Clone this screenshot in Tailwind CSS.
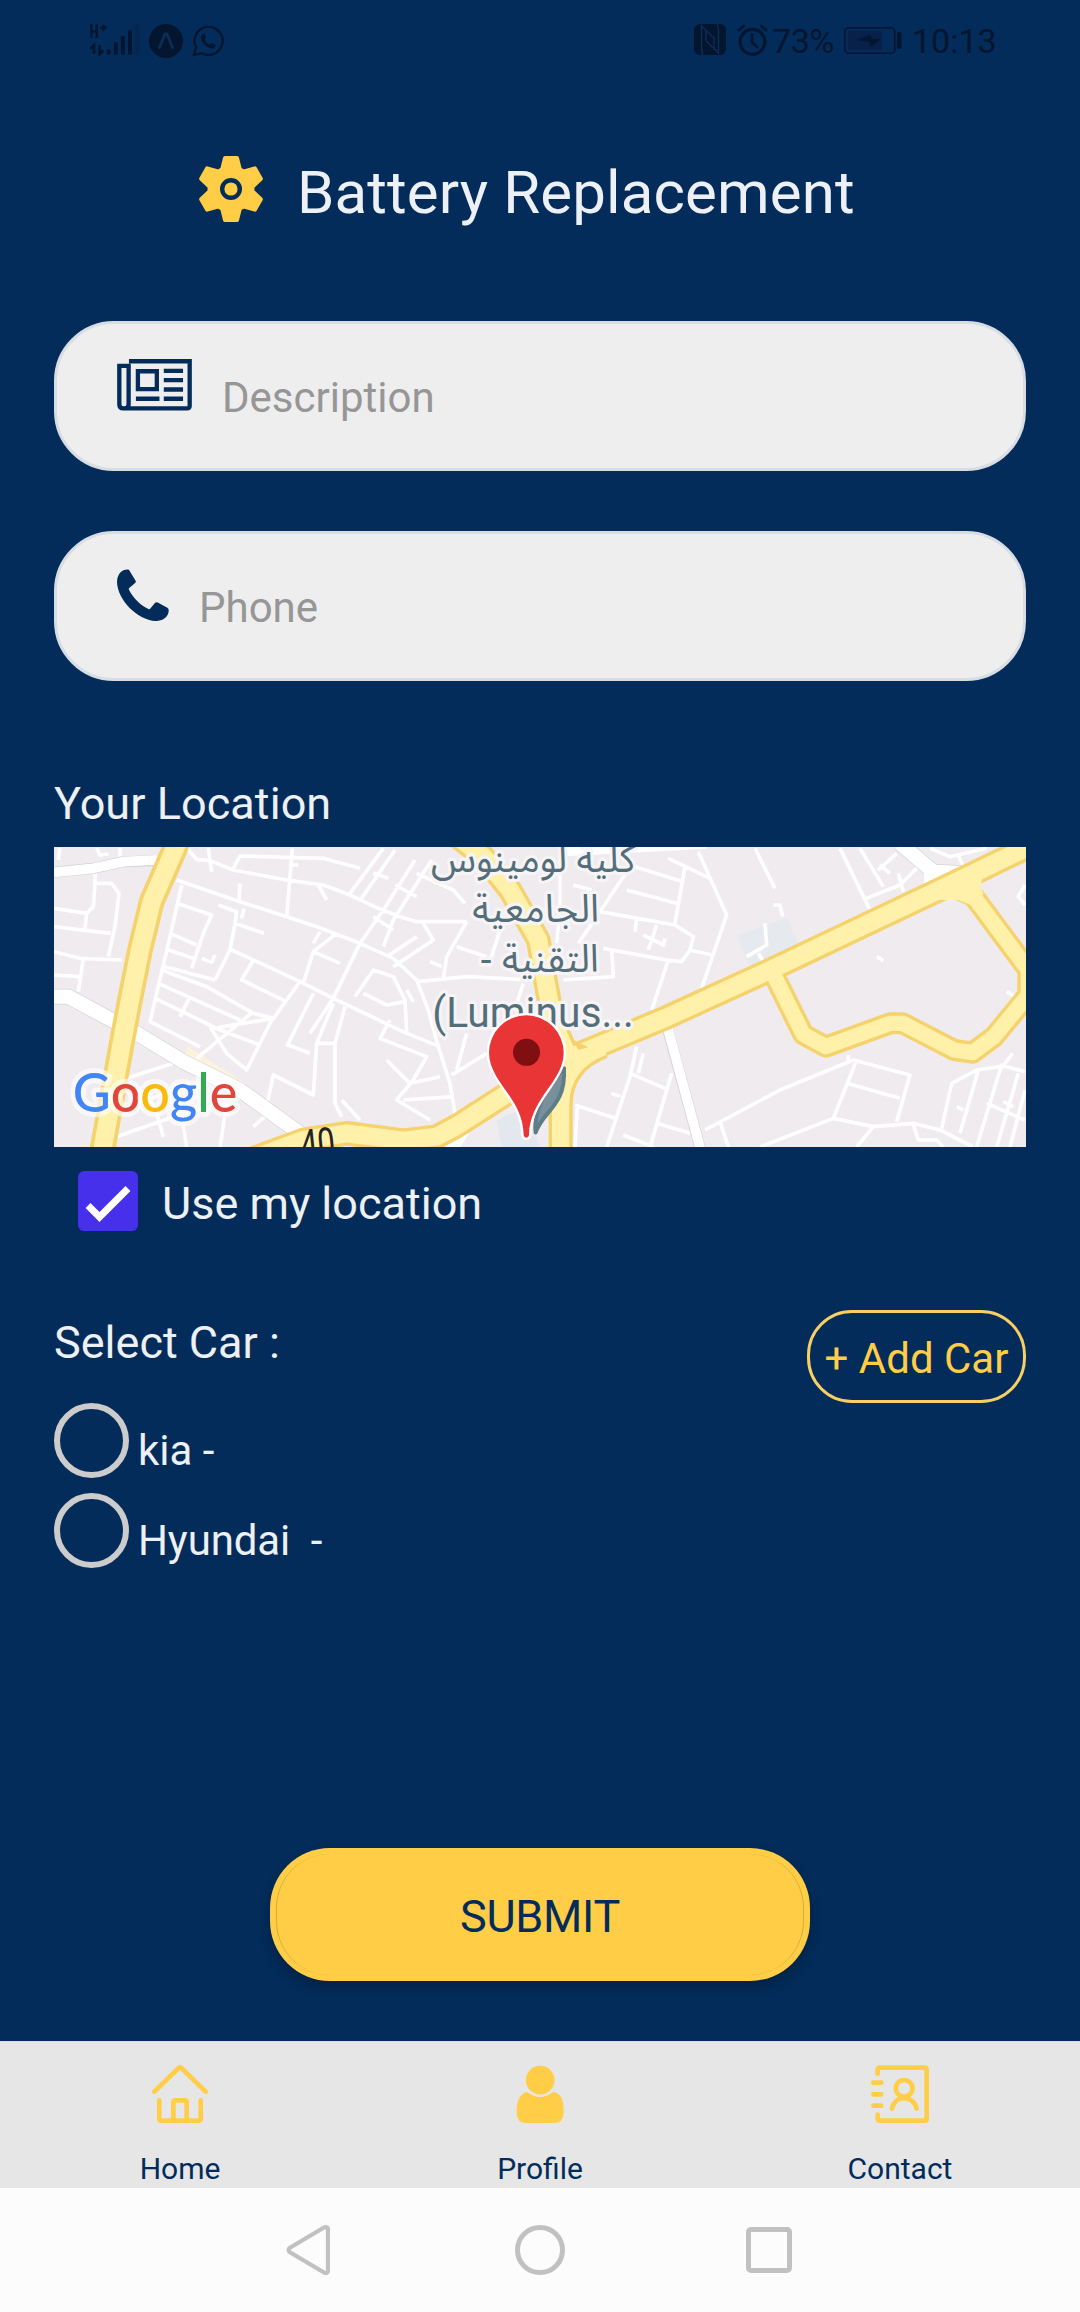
<!DOCTYPE html>
<html lang="en">
<head>
<meta charset="utf-8">
<title>Battery Replacement</title>
<script src="https://cdn.jsdelivr.net/npm/@tailwindcss/browser@4"></script>
</head>
<body class="w-[1080px] h-[2312px] overflow-hidden flex flex-col bg-[#032c5a] text-[#edf0f4] font-['Roboto',sans-serif] leading-none">

<!-- status bar -->
<div class="h-[80px] shrink-0 flex items-start pl-[89px] pr-[84px] text-[#04152f]">
  <svg class="mt-[23px] w-[51px] h-[34px]" viewBox="87 70 153 102" fill="none" stroke="currentColor">
    <path d="M94 74V115M110 74V115M94 95H110M121 84H140M130.500 75V94" stroke-width="7"/>
    <path d="M91 147L102 137V163M119 137V163L130 152" stroke-width="8"/>
    <path d="M146 155V160M167.500 133V160M188.500 114V160M210 96V160" stroke-width="12" stroke-linecap="round"/>
    <path d="M232 80V160" stroke="#07264f" stroke-width="12" stroke-linecap="round"/>
  </svg>
  <svg class="mt-[24px] ml-[9px] w-[34px] h-[34px]" viewBox="0 0 34 34">
    <circle cx="17" cy="17" r="17" fill="currentColor"/>
    <path d="M10.500 23.500L16 10H18L23.500 23.500" fill="none" stroke="#0a2c55" stroke-width="3" stroke-linecap="round"/>
  </svg>
  <svg class="mt-[25px] ml-[9px] w-[32px] h-[32px]" viewBox="0 0 32 32">
    <path d="M2 30L4 22A14 14 0 1 1 10 28.200Z" fill="none" stroke="currentColor" stroke-width="2.300"/>
    <path d="M9 11C10 8.500 11.500 8 12.800 9L14 12.500L12.500 14.500C13.500 17 15.500 19 18 19.800L20 18L23.500 20C24 22.500 21.500 23.800 19.500 23.500C13.500 22 9 17 9 11Z" fill="currentColor"/>
  </svg>
  <div class="flex-1"></div>
  <svg class="mt-[24px] w-[32px] h-[32px]" viewBox="0 0 32 32">
    <rect width="32" height="31" rx="6" fill="currentColor"/>
    <path d="M9 31C7 28 7.500 23 7.500 18V2L20 14V26M23 0C25 4 24.500 8 24.500 13V29L12 17V7" fill="none" stroke="#0a2c55" stroke-width="1.500"/>
  </svg>
  <svg class="mt-[24px] ml-[11px] w-[31px] h-[32px]" viewBox="0 0 31 32" fill="none" stroke="currentColor" stroke-linecap="round">
    <circle cx="15.500" cy="17.800" r="12.400" stroke-width="3.200"/>
    <path d="M15 10.500V18L20 23" stroke-width="2.800"/>
    <path d="M2 6L6.500 2M24.500 2L29 6" stroke-width="3"/>
  </svg>
  <span class="mt-[24px] ml-[4px] text-[34px] tracking-[-0.3px] w-[72px]">73%</span>
  <svg class="mt-[27px] w-[58px] h-[27px]" viewBox="0 0 58 27">
    <rect x=".8" y=".8" width="50" height="25.400" rx="4" fill="none" stroke="currentColor" stroke-width="1.600"/>
    <rect x="4" y="4" width="34" height="19" fill="#07214a"/>
    <path d="M13 13L26 8L28 12H37L27 19.500L25 15Z" fill="currentColor"/>
    <rect x="53" y="5" width="4.500" height="17" rx="2" fill="currentColor"/>
  </svg>
  <span class="mt-[24px] ml-[10px] w-[84px] text-[34px] whitespace-nowrap">10:13</span>
</div>

<!-- title -->
<header class="h-[241px] shrink-0 flex items-start pl-[198px] pt-[76px]">
  <svg class="w-[66px] h-[66px]" viewBox="-33 -33 66 66">
    <g fill="#ffcd46" stroke="#ffcd46" stroke-width="4" stroke-linejoin="round">
      <circle r="21.500"/>
      <path d="M-6 -31H6L8.500 -21V21L6 31H-6L-8.500 21V-21Z"/>
      <path transform="rotate(60)" d="M-6 -31H6L8.500 -21V21L6 31H-6L-8.500 21V-21Z"/>
      <path transform="rotate(120)" d="M-6 -31H6L8.500 -21V21L6 31H-6L-8.500 21V-21Z"/>
    </g>
    <circle r="8.800" fill="none" stroke="#032c5a" stroke-width="4.400"/>
  </svg>
  <h1 class="ml-[33px] mt-[7px] text-[60px] tracking-[0.12px] whitespace-nowrap">Battery Replacement</h1>
</header>

<!-- inputs -->
<div class="mx-[54px] h-[150px] shrink-0 rounded-[60px] border-[3px] border-[#d8dde4] bg-[#eee] flex items-start pl-[60px] text-[#969696]">
  <svg class="mt-[35px] w-[75px] h-[52px]" viewBox="231 148 226 155">
    <g fill="none" stroke="#032c5a" stroke-width="13">
      <path d="M267 154H450V288Q450 296 442 296H250Q238 296 238 284V168H266V285Q266 296 253 296"/>
      <path d="M294 184H351V238H294ZM288 267H359M372 183H430M372 211H430M372 239H430M372 267H430"/>
    </g>
  </svg>
  <span class="ml-[30px] mt-[53px] text-[42px]">Description</span>
</div>
<div class="mt-[60px] mx-[54px] h-[150px] shrink-0 rounded-[60px] border-[3px] border-[#d8dde4] bg-[#eee] flex items-start pl-[60px] text-[#969696]">
  <svg class="mt-[35px] w-[52px] h-[52px]" viewBox="231 776 157 157">
    <path d="M252 779Q261 776 267 778L288 813Q288 817 284 820L267 834Q266 837 268 840C280 864 303 886 326 897Q329 898 331 896L346 878Q350 875 354 877L383 893Q387 895 387 900C388 920 370 934 348 933C291 930 232 867 231 815Q232 787 252 779Z" fill="#032c5a"/>
  </svg>
  <span class="ml-[30px] mt-[53px] text-[42px]">Phone</span>
</div>

<!-- location -->
<h2 class="mt-[100px] ml-[54px] h-[66px] shrink-0 text-[45px] tracking-[0.05px]">Your Location</h2>
<svg class="mx-[54px] w-[972px] h-[300px] shrink-0 block" viewBox="42 231 2916 900">
  <rect x="42" y="231" width="2916" height="900" fill="#efebef"/>
  <path d="M445 830L615 940L600 962L410 895Z" fill="#fdf3dc"/>
  <path d="M1370 1050L1460 1010L1500 1131H1385Z" fill="#e4e8ee"/>
  <path d="M2090 495L2240 445L2275 520L2130 590Z" fill="#e6eaef"/>
  <!-- side streets, west -->
  <path fill="none" stroke="#fff" stroke-width="11" stroke-linejoin="round" d="M42 470L212 490M165 310V340H215L237 370L225 470L205 560M165 340L160 410L140 430L42 415M140 430L135 475M42 545L120 565L245 570M130 565L115 665M42 615L120 620M60 235L55 270M170 235L180 255L205 252M240 235V260M440 235L470 268L510 272M505 235L515 305M510 272L580 300L740 330L850 345L930 375L1015 415L1080 440L1130 455H1280M580 295L600 258L740 262L850 265L960 295M757 235L740 440M757 285H775M835 345L860 390M410 330L600 395L740 440L830 470L960 520L1060 565L1130 630L1165 720L1195 830L1230 940L1250 1060M600 340L597 390M612 415L605 445M535 405L590 425L585 460L672 490M585 460L570 540L525 630M425 345L390 500L330 755L480 830M410 400L515 435L490 490L455 595M390 490L470 525M385 540L460 565M375 590L525 630M485 565L515 577L525 555M575 540L780 635L880 685L1100 790L1200 830M640 570L605 630L740 695M365 600L500 650L640 730L700 745M355 640L600 750M345 685L540 780M450 680L420 740M700 745L520 775M640 725L470 865M510 770L560 850L620 900L690 760L740 690L780 635M540 780L660 825M1030 235L930 370M1065 240L965 385M1125 270L1030 420L960 520L880 685L810 790M1175 270L1060 450L1030 530M1065 345L1130 380M1000 310L1045 325M1000 440L1060 480M890 490L820 545L790 640M820 545L900 580M840 485L820 520M820 670L740 830M745 825L810 850M915 710L885 820V1000L905 1040M830 820H885M880 700L830 820L820 975L700 915L680 1010M905 990L960 1050M945 680L1000 600L1060 620L1095 690L1100 790M970 670L1040 705L1095 695M1130 635L1280 620L1480 630M1040 560L1130 500M1060 590L1180 510L1150 460M1280 455L1220 560L1210 625M1170 575L1205 590M1050 750L1020 805L1160 860L1120 930L1070 990L1170 1050M1040 870L1110 940L1200 920M1280 790L1250 900M1235 915L1340 850M1250 530L1340 560M1450 640L1430 700M1100 660L1120 695M1090 990L1240 980M260 925L400 880M270 1010L450 940M300 960L345 1010M410 940L440 1131M230 1100L400 1040L560 1000L540 1131M640 1070L680 1035L740 1045M350 1030L370 1100M1240 360L1275 400M1130 310L1240 360M1380 480L1345 590"/>
  <!-- side streets, east -->
  <g transform="translate(1440 0)" fill="none" stroke="#fff">
    <path stroke-width="11" stroke-linejoin="round" d="M535 245L620 435L545 655M445 265L570 325M345 290L490 335M495 290L465 460M320 360L470 400M330 290L240 425L465 465L520 500L510 540L485 575L440 570L250 535M510 540L575 555M445 570L395 720M240 425L175 520M350 445L345 485M370 495L430 525L435 505M275 540L280 620L130 630M410 465L385 540M160 345L215 360M705 235L765 355M760 405H780L788 440M735 460L740 525L680 560M715 550L730 575M960 235L1050 420M1040 385L1140 345L1210 275M1020 235L1090 350M1075 300L1130 250M1080 285L1110 310M1135 310L1150 365M1230 235L1290 260L1400 235M1315 255L1330 290M1515 345L1495 380L1515 405M1070 560L1090 572M1460 665L1480 677M555 1080L780 960L1000 870L1170 915L1130 1055M1010 870L940 1045M980 940L1140 985M720 1131L940 1045L1060 1070L1180 1060L1260 1080L1360 1131M1060 1070L1010 1131M600 1055L625 1131M985 855V870M1478 850L1440 900L1370 1131M1440 885L1515 905M1440 890L1370 900L1295 940L1265 1075M1375 900L1320 1090M1495 910L1430 1131M1400 1000L1515 1050M1310 1010L1330 1020M1450 995L1480 1010M1515 960L1470 1131M1180 1065L1195 1110H1250L1270 1131M350 830L330 920L260 1131M370 850L355 910M330 910L435 955M455 910L390 1131M165 1005L285 1045M410 1060L510 1090M310 1095L400 1131M275 970L300 980M172 1005L165 1131"/>
    <path d="M120 230V420L110 520" stroke-width="10"/>
  </g>
  <!-- wide white roads -->
  <g fill="none" stroke-linejoin="round">
    <path stroke="#d3d3d8" stroke-width="33" d="M42 307L160 295L250 275L340 272M1878 760L1985 1150"/>
    <path stroke="#fff" stroke-width="29" d="M42 307L160 295L250 275L350 270M1560 245L2000 222M1878 755L1985 1150"/>
    <path stroke="#d3d3d8" stroke-width="47" d="M20 680H85L215 750L290 790L430 875L600 960L800 1105M2580 220L2680 305L2780 310"/>
    <path stroke="#fff" stroke-width="43" d="M20 680H85L215 750L290 790L430 875L600 960L800 1105M2580 220L2680 305L2780 310"/>
    <path stroke="#fff" stroke-width="40" d="M1270 1080L1230 1140M2672 300V350"/>
  </g>
  <!-- main roads -->
  <g fill="none" stroke-linejoin="round">
    <g stroke="#f5d26c">
      <path stroke-width="77" d="M420 195L405 235L335 395L300 540L268 700L247 810L187 1140"/>
      <path stroke-width="74" d="M600 1180L790 1110L920 1090L1090 1112L1190 1100L1250 1068L1390 978L1560 875L1670 830L1880 742L2180 605L2655 380L2760 330L2970 228"/>
      <path stroke-width="74" d="M1240 190L1330 260L1410 360L1495 510L1518 640L1540 760L1580 850"/>
      <path stroke-width="72" d="M1690 830Q1560 880 1562 1010V1150"/>
      <path stroke-width="66" d="M2205 622L2290 793L2358 830L2550 760H2588L2743 840L2798 848L2862 800L2965 675V600L2800 378L2740 350"/>
    </g>
    <g stroke="#fff1aa">
      <path stroke-width="55" d="M420 195L405 235L335 395L300 540L268 700L247 810L187 1140"/>
      <path stroke-width="54" d="M600 1180L790 1110L920 1090L1090 1112L1190 1100L1250 1068L1390 978L1560 875L1670 830L1880 742L2180 605L2655 380L2760 330L2970 228"/>
      <path stroke-width="54" d="M1240 190L1330 260L1410 360L1495 510L1518 640L1540 760L1580 850"/>
      <path stroke-width="52" d="M1690 830Q1560 880 1562 1010V1150"/>
      <path stroke-width="46" d="M2180 580L2205 622L2290 793L2358 830L2550 760H2588L2743 840L2798 848L2862 800L2965 675V600L2800 378L2740 350"/>
    </g>
  </g>
  <path d="M2690 350L2830 300L2822 350L2830 372L2800 408L2755 390H2690Z" fill="#fff1aa"/>
  <path d="M1600 810L1645 832L1615 840Z" fill="#f5d26c"/>
  <!-- labels -->
  <g fill="#546e7a" stroke="#f6f4f6" stroke-width="20" stroke-linejoin="round" paint-order="stroke" text-anchor="middle" font-size="116" font-family="'Noto Sans Arabic','Noto Sans','DejaVu Sans',sans-serif">
    <text x="1479" y="305" direction="rtl" textLength="612" lengthAdjust="spacingAndGlyphs">كلية لومينوس</text>
    <text x="1487" y="455" direction="rtl" textLength="380" lengthAdjust="spacingAndGlyphs">الجامعية</text>
    <text x="1498" y="605" direction="rtl" textLength="356" lengthAdjust="spacingAndGlyphs">التقنية -</text>
    <text x="1479" y="771" font-size="128" font-family="Roboto,sans-serif" textLength="604" lengthAdjust="spacingAndGlyphs">(Luminus...</text>
  </g>
  <text x="785" y="1170" transform="rotate(-6 785 1170)" font-size="126" font-family="Roboto,sans-serif" textLength="105" lengthAdjust="spacingAndGlyphs" fill="#222">40</text>
  <!-- marker -->
  <path d="M1572 895C1578 1010 1510 1020 1487 1087C1483 1060 1490 1000 1540 930Z" fill="#78909c" stroke="#5f7d89" stroke-width="12" stroke-linejoin="round"/>
  <path d="M1459 736A112 112 0 0 1 1571 848C1571 935 1468 985 1467 1096Q1466 1103 1459 1103T1451 1096C1450 985 1347 935 1347 848A112 112 0 0 1 1459 736Z" fill="#e93535" stroke="#fff" stroke-width="14" paint-order="stroke"/>
  <circle cx="1459.500" cy="847" r="40.500" fill="#7f0f10"/>
  <text x="98" y="1025" font-size="164" font-weight="500" font-family="Lato,sans-serif" textLength="494" lengthAdjust="spacingAndGlyphs" stroke="#ffffff" stroke-opacity=".6" stroke-width="30" stroke-linejoin="round" paint-order="stroke"><tspan fill="#4285f4">G</tspan><tspan fill="#e2453a">o</tspan><tspan fill="#f9bb0b">o</tspan><tspan fill="#4285f4">g</tspan><tspan fill="#34a853">l</tspan><tspan fill="#e2453a">e</tspan></text>
</svg>

<div class="mt-[24px] h-[60px] shrink-0 flex items-start pl-[78px]">
  <svg class="w-[60px] h-[60px]" viewBox="0 0 60 60"><rect width="60" height="60" rx="6" fill="#4630eb"/><path d="M10 34.500L21.500 46L50 17.500" fill="none" stroke="#fff" stroke-width="7"/></svg>
  <span class="ml-[24px] mt-[10px] text-[45px] whitespace-nowrap">Use my location</span>
</div>

<!-- car picker -->
<div class="mt-[79px] h-[93px] shrink-0 flex items-start justify-between px-[54px]">
  <h2 class="mt-[10px] text-[45px]">Select Car :</h2>
  <div class="w-[219px] h-[93px] rounded-[45px] border-[3px] border-[#f8cf62] text-[#ffcd46] text-[42px] pt-[25px] text-center whitespace-nowrap">+ Add Car</div>
</div>
<div class="h-[75px] shrink-0 flex items-start pl-[54px]">
  <div class="size-[75px] rounded-full border-[6px] border-[#ccc]"></div>
  <span class="ml-[9px] mt-[27px] text-[42px]">kia -</span>
</div>
<div class="mt-[15px] h-[75px] shrink-0 flex items-start pl-[54px]">
  <div class="size-[75px] rounded-full border-[6px] border-[#ccc]"></div>
  <span class="ml-[9px] mt-[27px] text-[42px] tracking-[-0.1px] whitespace-pre">Hyundai  -</span>
</div>

<div class="mt-[280px] mx-auto w-[540px] h-[133px] shrink-0 rounded-[60px] bg-[#ffcd46] p-[6px] shadow-[0_6px_12px_rgba(0,0,0,0.25)]">
  <div class="h-full rounded-[54px] border-x border-[#d9ac38] pt-[40px] text-center text-[45px] tracking-[-0.3px] text-[#032c5a]">SUBMIT</div>
</div>

<!-- tab bar -->
<nav class="mt-[60px] h-[147px] shrink-0 bg-[#e6e6e6] border-t border-[#d4dcec] grid grid-cols-3 text-[#032c5a] text-[30px]">
  <div class="flex flex-col items-center pt-[22px]">
    <svg class="w-[60px] h-[61px]" viewBox="150 102 180 183" fill="none" stroke="#ffcd46" stroke-width="14" stroke-linecap="round" stroke-linejoin="round"><path d="M163 185L236 114Q240 111 244 114L317 185M178 211V266Q178 272 184 272H296Q302 272 302 266V211M220 270V217Q220 211 226 211H254Q260 211 260 217V270"/></svg>
    <span class="mt-[29px]">Home</span>
  </div>
  <div class="flex flex-col items-center pt-[22px]">
    <svg class="w-[60px] h-[61px]" viewBox="1231 102 180 183" fill="#ffcd46"><circle cx="1321.500" cy="150.500" r="43"/><path d="M1283 186Q1300 201 1321 201T1360 186C1385 188 1392 215 1392 240V248Q1392 279 1362 279H1281Q1251 279 1251 248V240C1251 215 1262 188 1283 186Z"/></svg>
    <span class="mt-[29px]">Profile</span>
  </div>
  <div class="flex flex-col items-center pt-[22px]">
    <svg class="w-[60px] h-[61px]" viewBox="870 102 180 183" fill="none" stroke="#ffcd46" stroke-width="14" stroke-linecap="round" stroke-linejoin="round"><path d="M893 131V120Q893 113 900 113H1034Q1040 113 1040 119V266Q1040 272 1034 272H900Q893 272 893 265V254M880 158H904M880 193H904M880 227H904M936 236C944 194 1001 194 1010 236"/><circle cx="972.500" cy="175" r="25"/></svg>
    <span class="mt-[29px]">Contact</span>
  </div>
</nav>

<!-- system navigation -->
<div class="h-[124px] shrink-0 bg-[#fcfcfc] flex items-center pl-[286px]">
  <svg class="w-[44px] h-[52px]" viewBox="0 0 44 52"><path d="M3.500 24Q2 26 3.500 28L38 48.500Q42 50 42 46V6Q42 2 38 3.500Z" fill="none" stroke="#c1c1c1" stroke-width="4.300" stroke-linejoin="round"/></svg>
  <div class="ml-[185px] size-[50px] rounded-full border-[5px] border-[#c1c1c1]"></div>
  <div class="ml-[181px] size-[46px] rounded-[5px] border-[5px] border-[#c1c1c1]"></div>
</div>
</body>
</html>
